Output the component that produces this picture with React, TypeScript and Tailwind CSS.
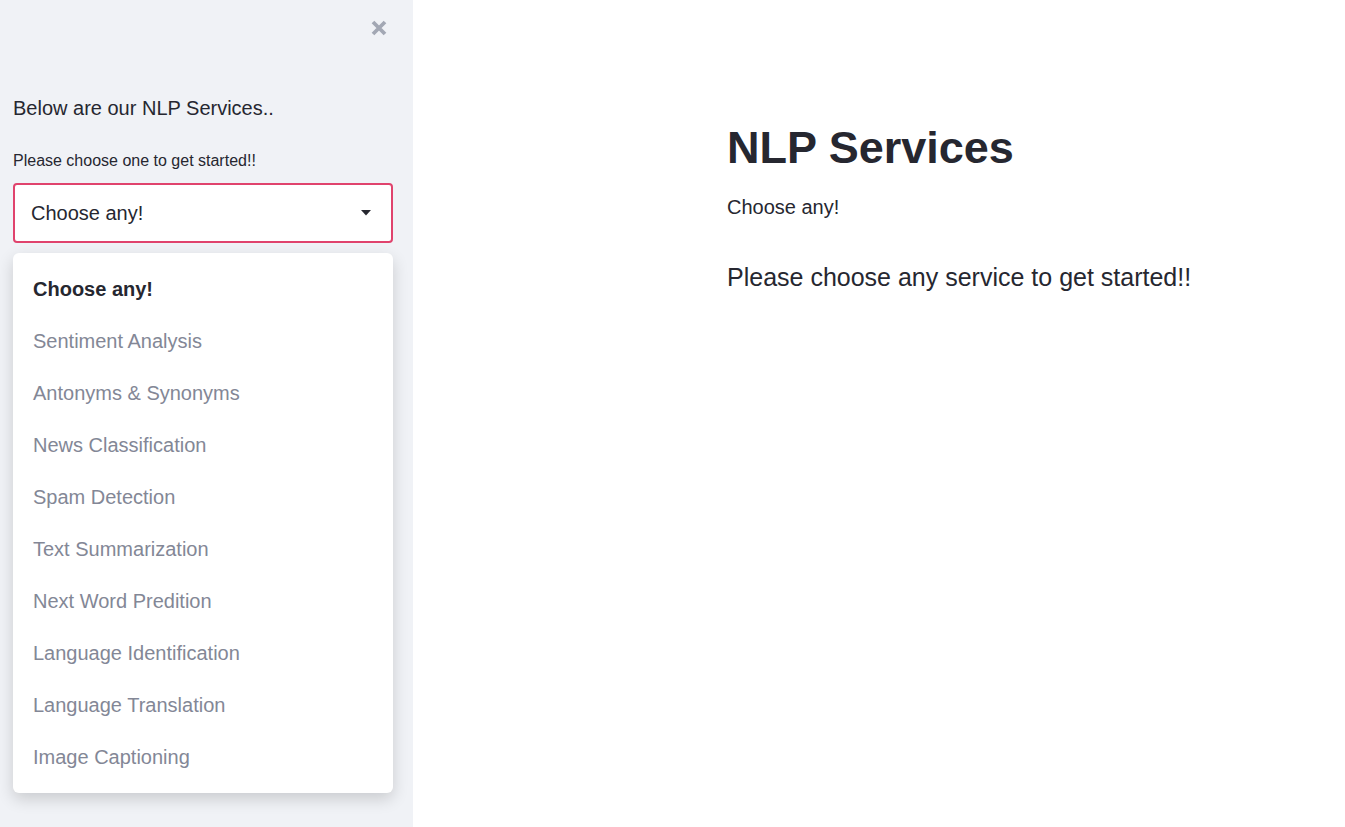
import React from "react";

const services = [
  "Sentiment Analysis",
  "Antonyms & Synonyms",
  "News Classification",
  "Spam Detection",
  "Text Summarization",
  "Next Word Predition",
  "Language Identification",
  "Language Translation",
  "Image Captioning",
];

const App: React.FC = () => {
  return (
    <div
      className="flex w-[1345px] h-[827px] overflow-hidden bg-white text-[#262730]"
      style={{ fontFamily: '"Liberation Sans", Arial, sans-serif' }}
    >
      {/* sidebar */}
      <aside className="w-[413px] shrink-0 h-full bg-[#f0f2f6] pl-[13px] pr-[20px] flex flex-col">
        <div className="flex justify-end pt-[19px] pr-[5px] h-[84px]">
          <svg width="18" height="18" viewBox="0 0 18 18" className="text-[#a3a8b4]">
            <path d="M3 3 L15 15 M15 3 L3 15" stroke="currentColor" strokeWidth="3.8" />
          </svg>
        </div>
        <p className="text-[20px] leading-[24px] mt-[12px]">Below are our NLP Services..</p>
        <p className="text-[16px] leading-[20px] mt-[31px]">Please choose one to get started!!</p>
        <div className="mt-[12px] h-[60px] bg-white border-2 border-[#e0436d] rounded-[4px] flex items-center justify-between pl-[16px] pr-[20px]">
          <span className="text-[20px] leading-[24px]">Choose any!</span>
          <svg width="10" height="6" viewBox="0 0 10 6">
            <path d="M0 0 H10 L5 5.5 Z" fill="#262730" />
          </svg>
        </div>
        <ul className="mt-[10px] bg-white rounded-[6px] py-[10px] shadow-[0_6px_16px_rgba(0,0,0,0.16)]">
          <li className="h-[52px] flex items-center px-[20px] text-[20px] font-bold text-[#262730]">
            Choose any!
          </li>
          {services.map((s) => (
            <li key={s} className="h-[52px] flex items-center px-[20px] text-[20px] text-[#838796]">
              {s}
            </li>
          ))}
        </ul>
      </aside>

      {/* main */}
      <main className="flex-1 pl-[314px] pt-[122px]">
        <h1 className="text-[45px] leading-[52px] font-bold">NLP Services</h1>
        <p className="text-[20px] leading-[24px] mt-[21px]">Choose any!</p>
        <p className="text-[25px] leading-[28px] mt-[44px]">Please choose any service to get started!!</p>
      </main>
    </div>
  );
};

export default App;
